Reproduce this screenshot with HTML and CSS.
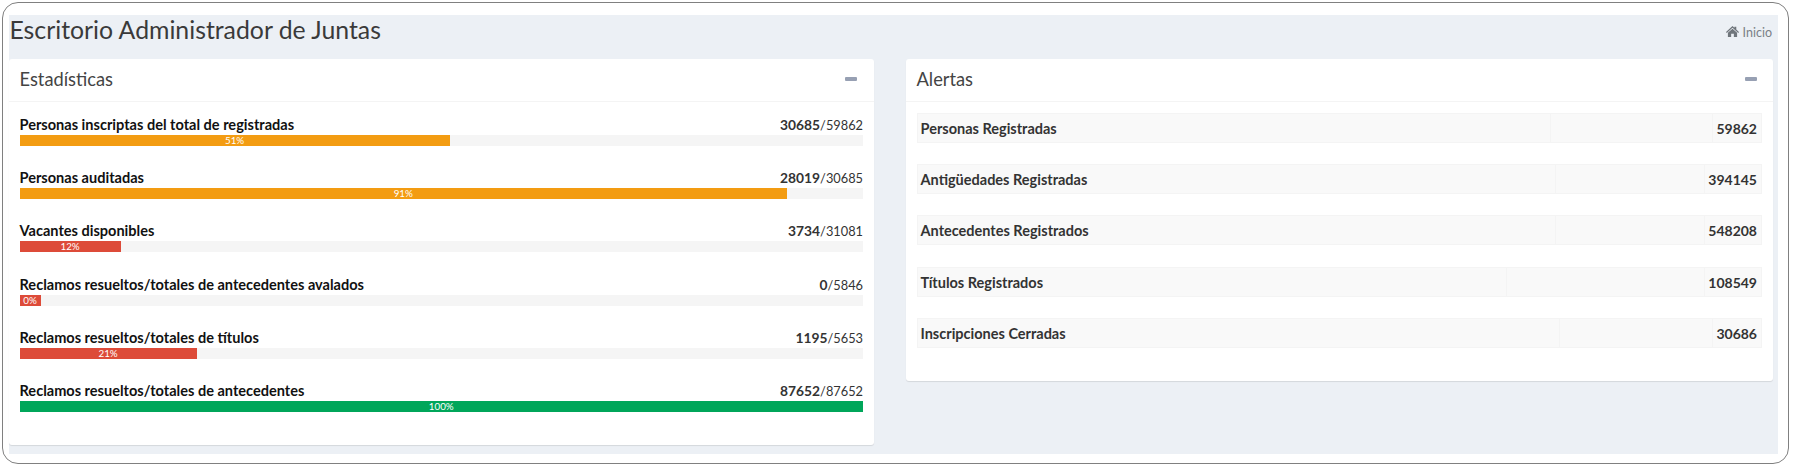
FILE: index.html
```html
<!DOCTYPE html>
<html lang="es">
<head>
<meta charset="utf-8">
<title>Escritorio Administrador de Juntas</title>
<link rel="stylesheet" href="styles.css">
</head>
<body>
<div class="frame">
  <main class="content">
    <header class="page-head">
      <h1>Escritorio Administrador de Juntas</h1>
      <a class="crumb" href="#"><svg class="home" viewBox="0 0 24 20" aria-hidden="true"><path d="M12 0 L15.5 3.2 V1 H19 V6.4 L24 11 L22.6 12.6 L12 3.2 L1.4 12.6 L0 11 Z M12 5 L20.5 12.4 V20 H14.5 V14 H9.5 V20 H3.5 V12.4 Z"/></svg> Inicio</a>
    </header>
    <div class="cols">
      <section class="card stats">
        <div class="card-head"><h2>Estadísticas</h2><span class="minus"></span></div>
        <div class="card-body stats-body">
          <div class="stat"><div class="stat-top"><span class="label">Personas inscriptas del total de registradas</span><span class="num"><b>30685</b>/59862</span></div><div class="track"><div class="bar amber" style="width:51%">51%</div></div></div>
          <div class="stat"><div class="stat-top"><span class="label">Personas auditadas</span><span class="num"><b>28019</b>/30685</span></div><div class="track"><div class="bar amber" style="width:91%">91%</div></div></div>
          <div class="stat"><div class="stat-top"><span class="label">Vacantes disponibles</span><span class="num"><b>3734</b>/31081</span></div><div class="track"><div class="bar red" style="width:12%">12%</div></div></div>
          <div class="stat"><div class="stat-top"><span class="label">Reclamos resueltos/totales de antecedentes avalados</span><span class="num"><b>0</b>/5846</span></div><div class="track"><div class="bar red" style="width:2.5%">0%</div></div></div>
          <div class="stat"><div class="stat-top"><span class="label">Reclamos resueltos/totales de títulos</span><span class="num"><b>1195</b>/5653</span></div><div class="track"><div class="bar red" style="width:21%">21%</div></div></div>
          <div class="stat"><div class="stat-top"><span class="label">Reclamos resueltos/totales de antecedentes</span><span class="num"><b>87652</b>/87652</span></div><div class="track"><div class="bar green" style="width:100%">100%</div></div></div>
        </div>
      </section>
      <section class="card alerts">
        <div class="card-head"><h2>Alertas</h2><span class="minus"></span></div>
        <div class="card-body alerts-body">
          <table class="row"><tr><td class="name" style="width:633px">Personas Registradas</td><td></td><td class="val">59862</td></tr></table>
          <table class="row"><tr><td class="name" style="width:638px">Antigüedades Registradas</td><td></td><td class="val">394145</td></tr></table>
          <table class="row"><tr><td class="name" style="width:638px">Antecedentes Registrados</td><td></td><td class="val">548208</td></tr></table>
          <table class="row"><tr><td class="name" style="width:589px">Títulos Registrados</td><td></td><td class="val">108549</td></tr></table>
          <table class="row"><tr><td class="name" style="width:642px">Inscripciones Cerradas</td><td></td><td class="val">30686</td></tr></table>
        </div>
      </section>
    </div>
  </main>
</div>
</body>
</html>
```
FILE: styles.css
```css
* { box-sizing: border-box; }
html, body { margin: 0; height: 100%; background: #fff; }
body { padding: 2px 4px 4px 2px; font-family: "Lato", "Liberation Sans", sans-serif; color: #333; }
.frame { height: 461.5px; border: 1.5px solid #808080; border-radius: 16px; padding: 11.5px 10px 9px 5.5px; background: #fff; overflow: hidden; }
.content { background: #ecf0f5; height: 100%; padding: 0 5px 8px 0; display: flex; flex-direction: column; }
.page-head { height: 44px; display: flex; justify-content: space-between; flex: none; }
h1 { margin: 0; font-size: 24.8px; font-weight: 400; line-height: 29px; padding-left: 1px; color: #3a3a3a; }
.crumb { font-size: 12.5px; color: #7a8086; text-decoration: none; padding-top: 10px; line-height: 16px; margin-right: 1px; white-space: nowrap; }
.home { width: 13px; height: 11px; fill: #6f757b; }
.cols { display: flex; gap: 32px; align-items: flex-start; flex: 1; }
.card { background: #fff; border-radius: 3px; box-shadow: 0 1px 1px rgba(0,0,0,.1); flex: 1; }
.stats { height: 386px; flex: 0 0 865px; }
.alerts { height: 322px; }
.card-head { height: 43px; border-bottom: 1px solid #f4f4f4; display: flex; justify-content: space-between; align-items: center; padding: 0 16.5px 0 11px; }
h2 { margin: 0 0 2px; font-size: 18.3px; font-weight: 400; color: #444; }
.minus { width: 12px; height: 3.5px; background: #97a0b3; border-radius: 1px; margin-bottom: 1px; }
.stats-body { padding: 12px 10.5px 0 11px; }
.stat { height: 53.4px; }
.stat-top { display: flex; justify-content: space-between; height: 21px; font-size: 14.55px; line-height: 21px; }
.label { font-weight: 700; color: #111; }
.num { font-size: 12.8px; }
.num b { font-weight: 700; font-size: 13.8px; }
.track { height: 11px; background: #f5f5f5; }
.bar { height: 100%; color: #fff; font-size: 9.8px; line-height: 11px; text-align: center; }
.amber { background: #f39c12; }
.red { background: #dd4b39; }
.green { background: #00a65a; }
.alerts-body { padding: 11px 11.5px 0 11px; }
.row { width: 100%; height: 30px; border-collapse: collapse; margin-bottom: 21.4px; background: #f9f9f9; font-size: 14.5px; }
.row td { border: 1px solid #f4f4f4; padding: 1px 3px 0; font-weight: 700; }
.row .val { width: 47px; font-size: 14px; text-align: right; padding-right: 3.5px; white-space: nowrap; }
```
